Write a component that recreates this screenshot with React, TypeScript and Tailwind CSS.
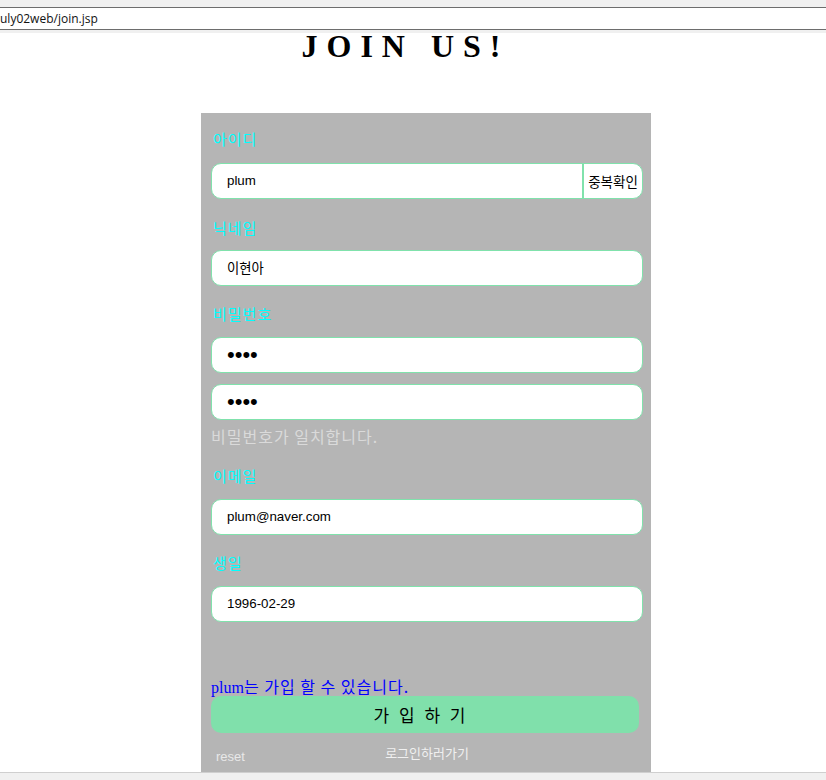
import React from "react";

const kr = { fontFamily: '"Noto Sans CJK KR", "Noto Sans", sans-serif' };
const ar = { fontFamily: '"Liberation Sans", Arial, "Noto Sans CJK KR", sans-serif' };

function Label({ text, className }: { text: string; className: string }) {
  return (
    <div
      className={`h-[20px] pl-[2px] text-[15px] leading-[20px] tracking-[1px] text-[#00ffff] ${className}`}
      style={kr}
    >
      {text}
    </div>
  );
}

function Field({ children, className }: { children: React.ReactNode; className: string }) {
  return (
    <div
      className={`flex h-[36px] items-center rounded-[10px] border border-[#80e2ac] bg-white pl-[15px] text-[13.333px] text-black ${className}`}
      style={ar}
    >
      {children}
    </div>
  );
}

export default function App() {
  return (
    <div className="flex h-[780px] flex-col overflow-hidden bg-white">
      <div className="h-[7px] bg-[#f0f0f0]" />
      <div
        className="flex h-[23px] items-center border-y border-[#6d6d6d] bg-white text-[12px] text-[#111]"
        style={{ fontFamily: '"Open Sans", "Noto Sans", sans-serif' }}
      >
        uly02web/join.jsp
      </div>
      <div className="h-[3px] bg-[#f0f0f0]" />

      <div className="flex h-[80px] justify-center pr-[15px] pt-[1px]">
        <h1
          className="text-[32px] font-bold leading-[24px] tracking-[9px] text-black"
          style={{ fontFamily: '"Liberation Serif", "Times New Roman", serif' }}
        >
          JOIN US!
        </h1>
      </div>

      <div className="ml-[201px] flex w-[450px] flex-1 flex-col bg-[#b5b5b5] pl-[10px] pr-[8px] pt-[16px]">
        <Label text="아이디" className="" />
        <div className="mt-[14px] flex h-[36px] overflow-hidden rounded-[10px] border border-[#80e2ac] bg-white">
          <div className="flex flex-1 items-center pl-[15px] text-[13.333px] text-black" style={ar}>
            plum
          </div>
          <div
            className="flex w-[60px] items-center justify-center border-l-2 border-[#80e2ac] text-[13.5px] text-black"
            style={kr}
          >
            중복확인
          </div>
        </div>

        <Label text="닉네임" className="mt-[19px]" />
        <Field className="mt-[12px]">
          <span style={kr}>이현아</span>
        </Field>

        <Label text="비밀번호" className="mt-[18px]" />
        <Field className="mt-[13px]">
          <span className="text-[22px] leading-none">••••</span>
        </Field>
        <Field className="mt-[11px]">
          <span className="text-[22px] leading-none">••••</span>
        </Field>
        <div className="mt-[6px] h-[20px] text-[16px] leading-[20px] tracking-[1px] text-[#dadada]" style={kr}>
          비밀번호가 일치합니다.
        </div>

        <Label text="이메일" className="mt-[20px]" />
        <Field className="mt-[13px]">plum@naver.com</Field>

        <Label text="생일" className="mt-[18px]" />
        <Field className="mt-[13px]">1996-02-29</Field>

        <div className="mt-[54px] h-[20px] text-[16px] leading-[20px] text-[#0000ff]" style={kr}>
          <span style={{ fontFamily: '"Liberation Serif", "Times New Roman", serif' }}>plum</span>
          <span className="tracking-[1px]">는 가입 할 수 있습니다.</span>
        </div>

        <div
          className="flex h-[37px] w-[428px] items-center justify-center rounded-[10px] bg-[#80e0ab] pr-[8px] text-[17px] tracking-[3px] text-black"
          style={kr}
        >
          가 입 하 기
        </div>

        <div className="mt-[10px] grid grid-cols-[1fr_auto_1fr] leading-[20px]">
          <div className="mt-[4px] pl-[5px] text-[13px] text-[#e8e8e8]" style={ar}>
            reset
          </div>
          <div className="text-[13px] text-[#f0f0f0]" style={kr}>
            로그인하러가기
          </div>
          <div />
        </div>
      </div>

      <div className="h-[8px] border-t border-[#cfcfcf] bg-[#f0f0f0]" />
    </div>
  );
}
